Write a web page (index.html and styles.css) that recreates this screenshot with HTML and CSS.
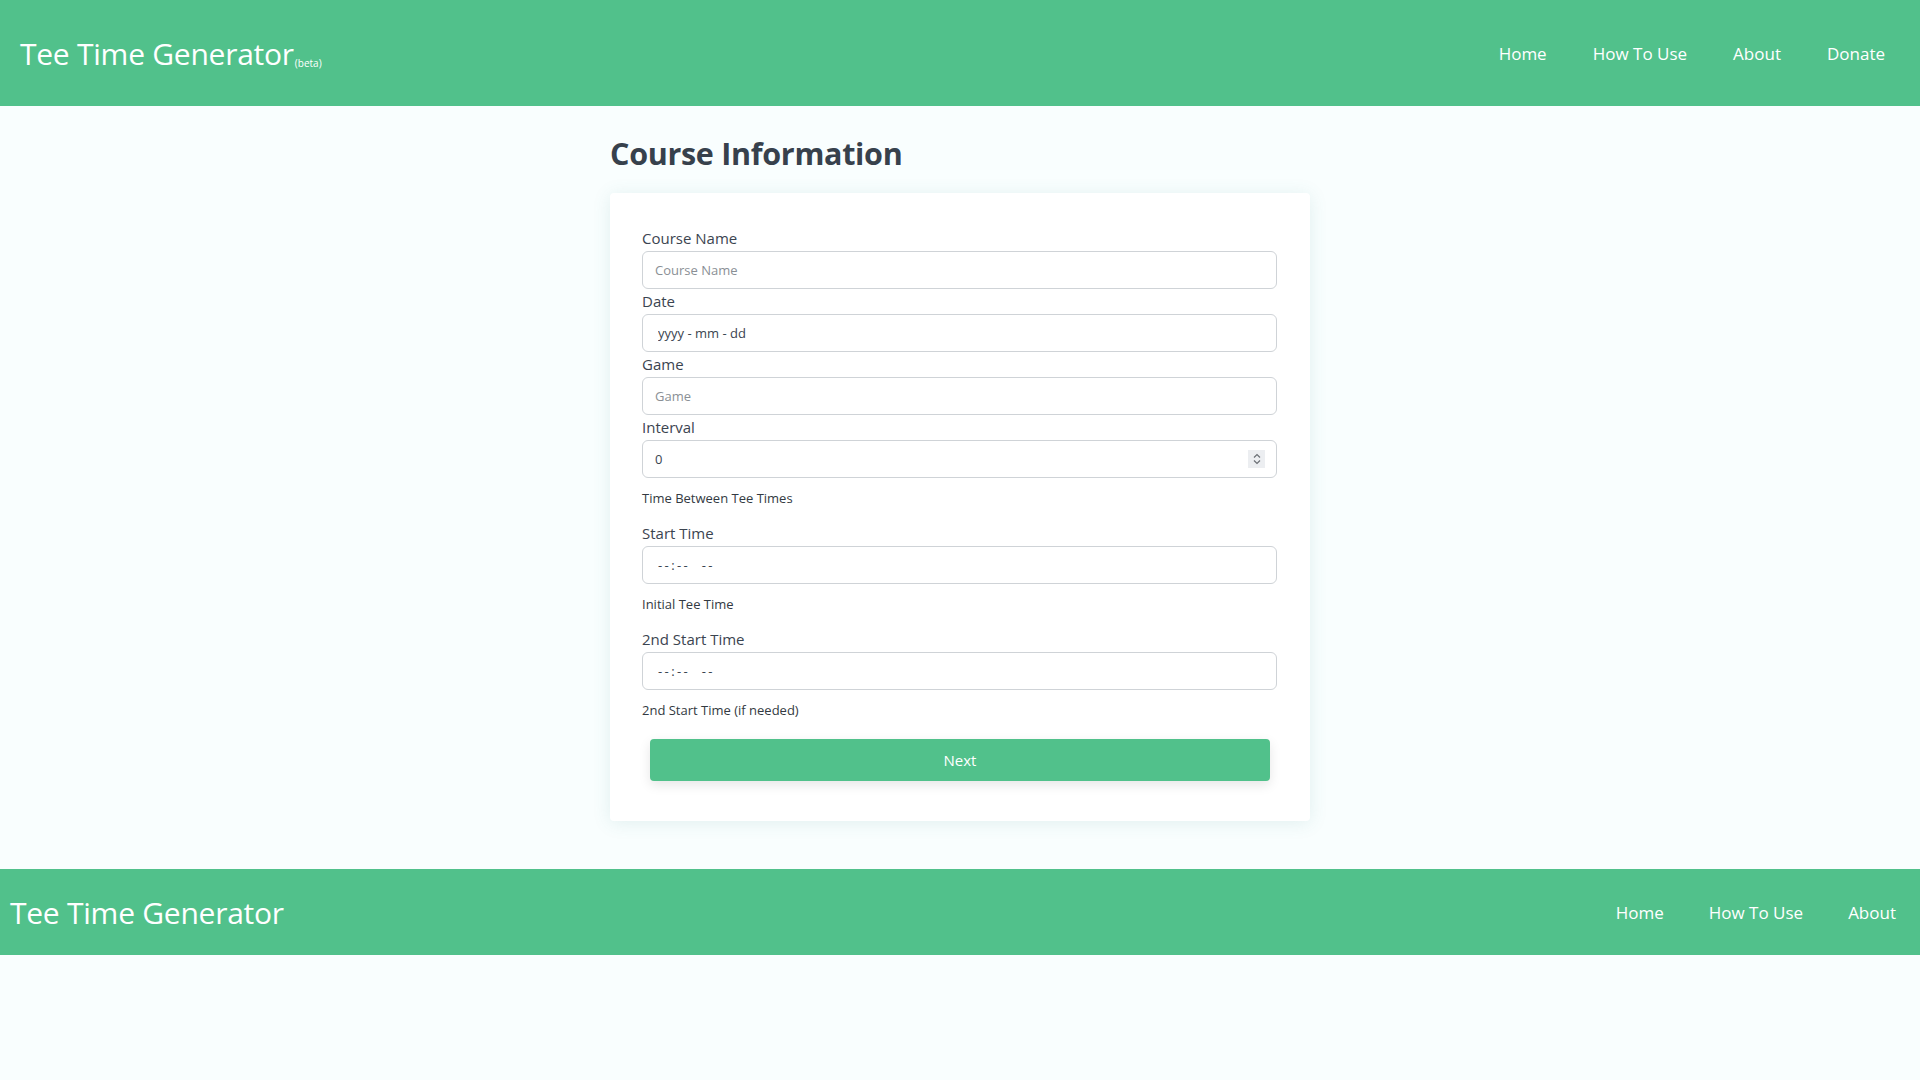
FILE: index.html
```html
<!DOCTYPE html>
<html lang="en">
<head>
<meta charset="utf-8">
<title>Tee Time Generator</title>
<link rel="stylesheet" href="styles.css">
</head>
<body>
<header class="topbar">
  <div class="brand">Tee Time Generator<span class="beta">(beta)</span></div>
  <nav class="nav">
    <a href="#">Home</a>
    <a href="#">How To Use</a>
    <a href="#">About</a>
    <a href="#">Donate</a>
  </nav>
</header>
<main class="main">
  <h1 class="title">Course Information</h1>
  <form class="card">
    <label class="label">Course Name</label>
    <input class="field" type="text" placeholder="Course Name">
    <label class="label">Date</label>
    <input class="field field-dt" type="text" value="yyyy - mm - dd" readonly>
    <label class="label">Game</label>
    <input class="field" type="text" placeholder="Game">
    <label class="label">Interval</label>
    <div class="numwrap">
      <input class="field" type="text" value="0" readonly>
      <span class="spin">
        <svg width="10" height="14" viewBox="0 0 10 14"><path d="M2 5.5 L5 2.5 L8 5.5" fill="none" stroke="#6b6f75" stroke-width="1.2"/><path d="M2 8.5 L5 11.5 L8 8.5" fill="none" stroke="#6b6f75" stroke-width="1.2"/></svg>
      </span>
    </div>
    <p class="help">Time Between Tee Times</p>
    <label class="label">Start Time</label>
    <input class="field field-dt field-time" type="text" value="--:--  --" readonly>
    <p class="help">Initial Tee Time</p>
    <label class="label">2nd Start Time</label>
    <input class="field field-dt field-time" type="text" value="--:--  --" readonly>
    <p class="help">2nd Start Time (if needed)</p>
    <button class="btn" type="button">Next</button>
  </form>
</main>
<footer class="footbar">
  <div class="brand brand-foot">Tee Time Generator</div>
  <nav class="nav nav-foot">
    <a href="#">Home</a>
    <a href="#">How To Use</a>
    <a href="#">About</a>
  </nav>
</footer>
</body>
</html>
```
FILE: styles.css
```css
* { box-sizing: border-box; }
html, body {
  margin: 0;
  padding: 0;
  background: #f9fefe;
  font-family: "Open Sans", "Noto Sans", sans-serif;
  color: #3b4450;
}
.topbar {
  height: 106px;
  background: #51c18b;
  display: flex;
  align-items: center;
  justify-content: space-between;
  padding: 0 35px 0 20px;
}
.brand {
  color: #fff;
  font-size: 30px;
  font-weight: 400;
  letter-spacing: -0.25px;
  white-space: nowrap;
}
.beta {
  font-size: 10px;
  margin-left: 1px;
  letter-spacing: 0;
  vertical-align: -2px;
}
.nav {
  display: flex;
  gap: 46px;
}
.nav a {
  color: #fff;
  text-decoration: none;
  font-size: 17px;
}
.main {
  width: 700px;
  margin: 0 auto;
  padding-top: 28px;
}
.title {
  margin: 0 0 21px;
  font-size: 30.5px;
  line-height: 38px;
  font-weight: 700;
  color: #37414c;
  letter-spacing: -0.3px;
}
.card {
  background: #fff;
  border-radius: 4px;
  box-shadow: 0 2px 18px rgba(60, 140, 140, 0.13);
  padding: 33px 33px 40px 32px;
  display: flex;
  flex-direction: column;
}
.label {
  font-size: 15px;
  line-height: 25px;
  color: #3b4450;
}
.field {
  width: 100%;
  height: 38px;
  border: 1px solid #cfd3d7;
  border-radius: 6px;
  padding: 0 12px;
  font-family: "Open Sans", "Noto Sans", sans-serif;
  font-size: 13px;
  color: #3b4450;
  background: #fff;
  outline: none;
}
.field::placeholder { color: #8a8f95; }
.field-dt { padding-left: 15px; }
.field-time { letter-spacing: 2.4px; white-space: pre; }
.numwrap { position: relative; }
.spin {
  position: absolute;
  right: 12px;
  top: 10px;
  width: 17px;
  height: 18px;
  background: #eceef1;
  display: flex;
  align-items: center;
  justify-content: center;
}
.help {
  margin: 10px 0 13px;
  font-size: 13px;
  line-height: 20px;
  color: #333a42;
}
.btn {
  margin: 6px 7px 0 8px;
  height: 42px;
  background: #51c18b;
  border: none;
  border-radius: 4px;
  color: #fff;
  font-family: "Open Sans", "Noto Sans", sans-serif;
  font-size: 15px;
  box-shadow: 0 4px 12px rgba(0, 0, 0, 0.1);
}
.footbar {
  margin-top: 48px;
  height: 86px;
  background: #51c18b;
  display: flex;
  align-items: center;
  justify-content: space-between;
  padding: 0 24px 0 10px;
}
.nav-foot { gap: 45px; }
```
